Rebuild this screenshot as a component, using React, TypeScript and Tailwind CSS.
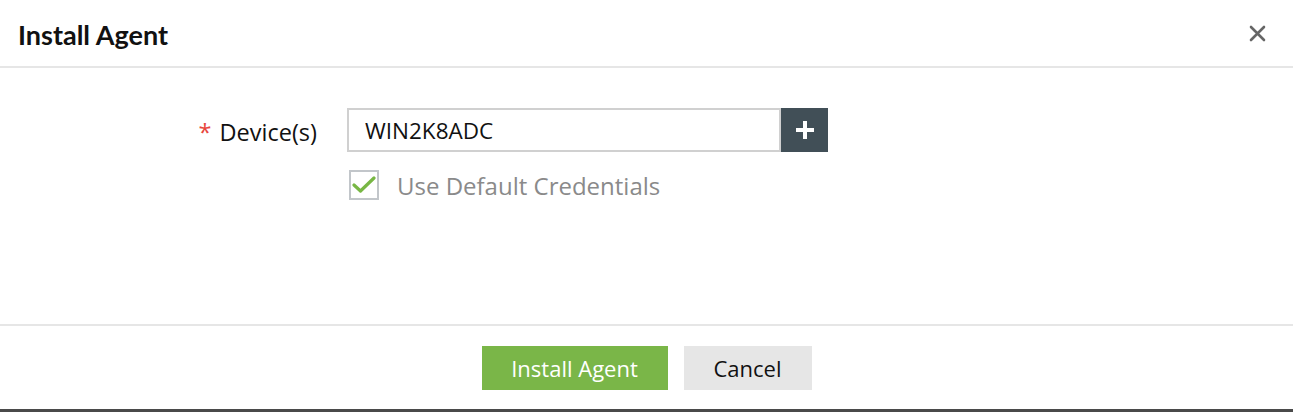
import React, { useState } from "react";

const App: React.FC = () => {
  const [useDefault, setUseDefault] = useState(true);

  return (
    <div className="w-[1293px] h-[412px] bg-white flex flex-col font-['Open_Sans',sans-serif]">
      {/* header */}
      <div className="h-[68px] shrink-0 flex items-center justify-between pl-[18px] pr-[27px] border-b-2 border-[#e6e6e6]">
        <h3 className="text-[27px] font-bold text-[#111] font-['Lato',sans-serif] leading-none mt-[2px]">
          Install Agent
        </h3>
        <button className="w-[17px] h-[17px] flex items-center justify-center text-[#666]">
          <svg width="17" height="17" viewBox="0 0 17 17">
            <path d="M2 2 L15 15 M15 2 L2 15" stroke="currentColor" strokeWidth="2.6" strokeLinecap="round" />
          </svg>
        </button>
      </div>

      {/* body */}
      <div className="flex-1 pt-[40px]">
        <div className="flex items-center">
          <label className="w-[317px] text-right text-[23.5px] text-[#111] leading-none mt-[5px]">
            <span className="text-[#e8473d] mr-[8px]">*</span>
            Device(s)
          </label>
          <div className="ml-[30px] flex">
            <input
              className="w-[434px] h-[44px] border-2 border-[#d0d0d0] px-[16px] text-[22.5px] text-[#111] outline-none"
              defaultValue="WIN2K8ADC"
            />
            <button className="w-[47px] h-[44px] bg-[#414f57] flex items-center justify-center">
              <svg width="20" height="20" viewBox="0 0 20 20">
                <path d="M10 1 V19 M1 10 H19" stroke="white" strokeWidth="4" />
              </svg>
            </button>
          </div>
        </div>
        <div className="flex items-center ml-[349px] mt-[18px]">
          <button
            onClick={() => setUseDefault(!useDefault)}
            className="w-[30px] h-[30px] border-2 border-[#c2c6ca] flex items-center justify-center"
          >
            {useDefault && (
              <svg width="24" height="18" viewBox="0 0 24 18">
                <path d="M2 9 L8.5 15 L22 2" stroke="#78b744" strokeWidth="3.2" fill="none" strokeLinecap="round" strokeLinejoin="round" />
              </svg>
            )}
          </button>
          <span className="ml-[18px] text-[24px] text-[#8a8a8a] leading-none mt-[2px]">Use Default Credentials</span>
        </div>
      </div>

      {/* footer */}
      <div className="h-[85px] shrink-0 border-t-2 border-[#e6e6e6] flex items-start justify-center gap-[16px] pt-[20px]">
        <button className="w-[186px] h-[44px] bg-[#7ab648] text-white text-[22px]">Install Agent</button>
        <button className="w-[128px] h-[44px] bg-[#e6e6e6] text-[#111] text-[22px]">Cancel</button>
      </div>
      <div className="h-[3px] shrink-0 bg-[#4a4a4a]" />
    </div>
  );
};

export default App;
